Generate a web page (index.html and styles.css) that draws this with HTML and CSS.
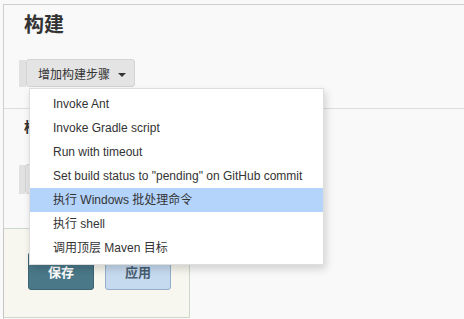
FILE: index.html
```html
<!DOCTYPE html>
<html lang="zh-CN">
<head>
    <meta charset="UTF-8">
    <title>构建</title>
    <link rel="stylesheet" href="styles.css">
</head>
<body>
    <div class="page">
        <div class="section">
            <h2>构建</h2>
            <div class="step-row">
                <span class="strip"></span>
                <div class="dropdown">
                    <button class="add-button">增加构建步骤 <span class="caret"></span></button>
                    <ul class="menu">
                        <li>Invoke Ant</li>
                        <li>Invoke Gradle script</li>
                        <li>Run with timeout</li>
                        <li>Set build status to "pending" on GitHub commit</li>
                        <li class="active">执行 Windows 批处理命令</li>
                        <li>执行 shell</li>
                        <li>调用顶层 Maven 目标</li>
                    </ul>
                </div>
            </div>
        </div>

        <div class="section section-post">
            <h3>构建后操作</h3>
            <div class="step-row step-row-low">
                <span class="strip strip-tall"></span>
                <button class="add-button add-button-wide">增加构建后操作步骤 <span class="caret"></span></button>
            </div>
        </div>

        <div class="bottom-bar">
            <button class="btn btn-save">保存</button>
            <button class="btn btn-apply">应用</button>
        </div>
    </div>
</body>
</html>
```

FILE: styles.css
```css
* {
    margin: 0;
    padding: 0;
    box-sizing: border-box;
}

body {
    font-family: "Liberation Sans", "Noto Sans CJK SC", sans-serif;
    background: #f9f9f9;
    color: #333;
    height: 319px;
    overflow: hidden;
}

.page {
    margin: 4px 0 0 3px;
    height: 315px;
    border-top: 1px solid #cfcfcf;
    border-left: 1px solid #cfcfcf;
}

.section {
    padding-left: 20px;
    border-bottom: 1px solid #dcdcdc;
    padding-bottom: 21px;
}

h2 {
    font-size: 20px;
    line-height: 24px;
    font-weight: 700;
    margin-top: 8px;
    margin-bottom: 22px;
}

h3 {
    font-size: 14px;
    line-height: 18px;
    font-weight: 700;
}

.step-row {
    display: flex;
    margin-left: -5px;
    height: 28px;
}

.strip {
    width: 7px;
    background: #e1e1e1;
    margin-top: 1px;
}

.dropdown {
    position: relative;
}

.add-button {
    height: 28px;
    width: 109px;
    padding-left: 11px;
    text-align: left;
    font-family: "Liberation Sans", "Noto Sans CJK SC", sans-serif;
    font-size: 12px;
    color: #333;
    background: #e4e4e4;
    border: 1px solid #d4d4d4;
    border-radius: 3px;
    white-space: nowrap;
}

.add-button-wide {
    width: auto;
    padding-right: 10px;
    height: 30px;
}

.caret {
    display: inline-block;
    vertical-align: middle;
    margin-left: 5px;
    border-top: 4px solid #333;
    border-left: 4px solid transparent;
    border-right: 4px solid transparent;
}

.menu {
    position: absolute;
    top: 29px;
    left: 3px;
    width: 295px;
    padding: 3px 0 4px;
    list-style: none;
    background: #fff;
    border: 1px solid #dedede;
    box-shadow: 2px 4px 8px rgba(0, 0, 0, 0.16);
    z-index: 10;
}

.menu li {
    height: 24px;
    line-height: 24px;
    padding-left: 23px;
    font-size: 12px;
    color: #333;
    white-space: nowrap;
}

.menu li.active {
    background: #b4d4fb;
}

.section-post {
    padding-top: 9px;
    border-bottom: none;
    padding-bottom: 0;
}

.step-row-low {
    margin-top: 28px;
    height: 30px;
}

.strip-tall {
    width: 6px;
}

.bottom-bar {
    margin-top: 34px;
    margin-left: -1px;
    width: 187px;
    height: 90px;
    padding: 23px 0 0 24px;
    display: flex;
    gap: 11px;
    background: #f7f7ef;
    border: 1px solid #cdd8cd;
    border-left-color: #c6c6c6;
}

.btn {
    width: 66px;
    height: 38px;
    border-radius: 3px;
    font-family: "Liberation Sans", "Noto Sans CJK SC", sans-serif;
    font-size: 13px;
    font-weight: 700;
}

.btn-save {
    background: #4a7888;
    color: #fff;
    border: 1px solid #3d6472;
}

.btn-apply {
    background: #c6daef;
    color: #4a5f73;
    border: 1px solid #93afcc;
}
```
